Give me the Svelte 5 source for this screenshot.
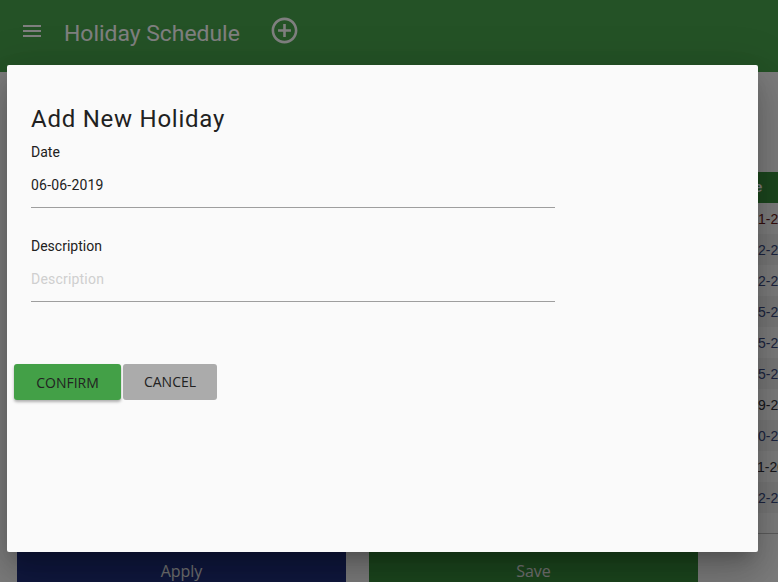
<script>
  let rows = [
    { date: "26-01-2019", kind: "red" },
    { date: "04-02-2019", kind: "opt" },
    { date: "19-02-2019", kind: "opt" },
    { date: "01-05-2019", kind: "opt" },
    { date: "18-05-2019", kind: "opt" },
    { date: "29-05-2019", kind: "opt" },
    { date: "10-09-2019", kind: "off" },
    { date: "02-10-2019", kind: "opt" },
    { date: "09-11-2019", kind: "off" },
    { date: "25-12-2019", kind: "opt" },
  ];
</script>

<div class="page">
  <header class="toolbar">
    <svg class="menu" width="24" height="24" viewBox="0 0 24 24">
      <path d="M3 18h18v-2H3v2zm0-5h18v-2H3v2zm0-7v2h18V6H3z" fill="currentColor" />
    </svg>
    <span class="title">Holiday Schedule</span>
    <svg class="add" width="31" height="31" viewBox="0 0 24 24">
      <path
        d="M13 7h-2v4H7v2h4v4h2v-4h4v-2h-4V7zm-1-5C6.480 2 2 6.480 2 12s4.480 10 10 10 10-4.480 10-10S17.520 2 12 2zm0 18c-4.410 0-8-3.590-8-8s3.590-8 8-8 8 3.590 8 8-3.590 8-8 8z"
        fill="currentColor"
      />
    </svg>
  </header>

  <main class="content">
    <div class="table">
      <div class="thead">Date</div>
      {#each rows as row, i}
        <div class="row {row.kind}" class:odd={i % 2 === 1}>{row.date}</div>
      {/each}
    </div>
  </main>

  <footer class="actions">
    <button class="apply">Apply</button>
    <button class="save">Save</button>
  </footer>
</div>

<div class="backdrop"></div>

<div class="dialog">
  <div class="form">
    <h2>Add New Holiday</h2>
    <label class="field">
      <span>Date</span>
      <input type="text" value="06-06-2019" />
    </label>
    <label class="field">
      <span>Description</span>
      <input type="text" placeholder="Description" />
    </label>
  </div>
  <div class="buttons">
    <button class="confirm">CONFIRM</button>
    <button class="cancel">CANCEL</button>
  </div>
</div>

<style>
  :global(body) {
    margin: 0;
    background: #fafafa;
    overflow: hidden;
  }

  .page {
    display: flex;
    flex-direction: column;
    height: 582px;
    overflow: hidden;
    font-family: "Liberation Sans", sans-serif;
  }

  .toolbar {
    display: flex;
    align-items: center;
    flex: none;
    height: 62px;
    padding: 0 0 10px 20px;
    color: #fff;
    background: #48a44c;
  }
  .menu {
    margin-right: 20px;
  }
  .title {
    margin-top: 4px;
    font: 400 22.9px "Roboto", sans-serif;
    color: #fff;
  }
  .add {
    margin: 0 0 2px 29px;
  }

  .content {
    flex: 1;
    min-height: 0;
    padding: 100px 0 0 730px;
    margin-bottom: 19px;
  }
  .table {
    width: 200px;
    padding-bottom: 20px;
    border-bottom: 1px solid #bbb;
    font-size: 14px;
  }
  .thead {
    height: 31px;
    line-height: 31px;
    padding-left: 2px;
    background: #388e3c;
    color: #fff;
    font-weight: 700;
  }
  .row {
    box-sizing: border-box;
    height: 31px;
    padding-top: 1px;
    line-height: 31px;
  }
  .row.odd {
    background: #f0f0f0;
  }
  .red {
    color: #6a1a1a;
  }
  .off {
    color: #303038;
  }
  .opt {
    color: #3a4a80;
  }

  .actions {
    display: flex;
    flex: none;
    gap: 23px;
    padding-left: 17px;
    margin-bottom: -8px;
  }
  .actions button {
    width: 329px;
    height: 38px;
    border: 0;
    padding: 0;
    color: #e4e4e4;
    font: 16px "Open Sans", sans-serif;
  }
  .apply {
    background: #20307e;
  }
  .save {
    background: #388e3c;
  }

  .backdrop {
    position: absolute;
    inset: 0;
    height: 582px;
    background: rgba(0, 0, 0, 0.5);
  }

  .dialog {
    position: absolute;
    top: 65px;
    left: 7px;
    width: 751px;
    height: 487px;
    background: #fafafa;
    border-radius: 2px;
    box-shadow:
      0 11px 15px -7px rgba(0, 0, 0, 0.2),
      0 24px 38px 3px rgba(0, 0, 0, 0.14),
      0 9px 46px 8px rgba(0, 0, 0, 0.12);
  }
  .form {
    width: 524px;
    padding: 37px 0 0 24px;
  }
  h2 {
    margin: 0 0 8px;
    font: 400 24px/34px "Roboto", sans-serif;
    letter-spacing: 0.75px;
    color: #212121;
  }
  .field {
    display: block;
    margin-bottom: 30px;
    font: 14px/16px "Roboto", sans-serif;
    color: #212121;
  }
  .field span {
    display: block;
  }
  .field input {
    display: block;
    box-sizing: border-box;
    width: 100%;
    height: 48px;
    padding: 3px 0 0;
    border: 0;
    border-bottom: 1px solid #9e9e9e;
    outline: 0;
    background: transparent;
    font: inherit;
    letter-spacing: 0.2px;
    color: inherit;
  }
  .field input::placeholder {
    color: #cfcfcf;
  }

  .buttons {
    display: flex;
    gap: 2px;
    padding: 32px 0 0 7px;
  }
  .buttons button {
    height: 36px;
    padding: 0;
    border: 0;
    border-radius: 3px;
    font: 14px "Open Sans", sans-serif;
    color: #222;
  }
  .confirm {
    width: 107px;
    background: #43a047;
    color: #12351a;
    box-shadow: 0 2px 3px rgba(0, 0, 0, 0.3);
  }
  .buttons .cancel {
    width: 94px;
    padding-bottom: 2px;
    background: #ababab;
  }
</style>
